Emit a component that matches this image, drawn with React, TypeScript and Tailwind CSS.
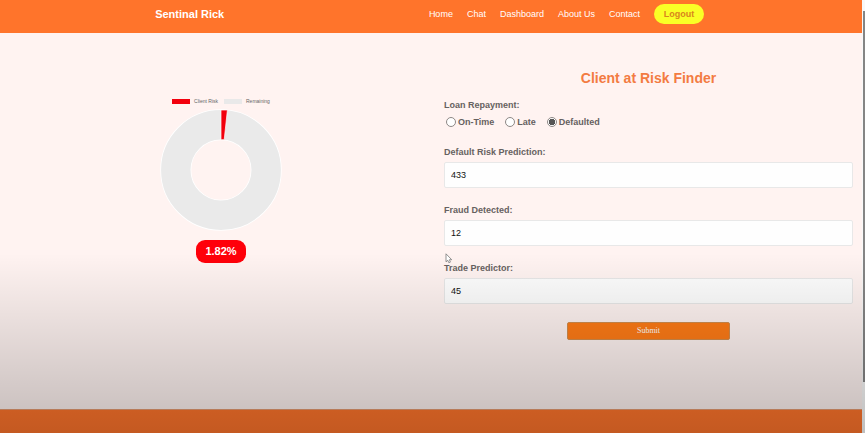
import { useState } from "react";

const links = ["Home", "Chat", "Dashboard", "About Us", "Contact"];
const repayments = ["On-Time", "Late", "Defaulted"];

function Header() {
  return (
    <header className="flex h-[33px] items-start justify-between bg-[#ff742b] pl-[18%] pr-[158px] pt-1 text-white">
      <div className="text-[11px] font-bold leading-5">Sentinal Rick</div>
      <nav className="flex items-center gap-3.5 text-[9px] leading-5">
        {links.map((l) => (
          <a key={l} href="#" className="whitespace-nowrap">
            {l}
          </a>
        ))}
        <button className="h-5 w-[50px] rounded-full bg-[#faff26] font-bold text-[#d9861c]">Logout</button>
      </nav>
    </header>
  );
}

function RiskChart() {
  return (
    <section className="flex flex-col items-center pt-[65px]">
      <div className="flex items-center gap-1.5 text-[5px] leading-[7px] text-[#666]">
        <span className="flex items-center gap-1">
          <i className="h-[5px] w-[18px] bg-[#f2000d]" />
          Client Risk
        </span>
        <span className="flex items-center gap-1">
          <i className="h-[5px] w-[18px] bg-[#e9e9e9]" />
          Remaining
        </span>
      </div>
      <svg viewBox="0 0 122 122" className="mt-1 size-[122px]" role="img" aria-label="Client risk 1.82%">
        <circle cx="61" cy="61" r="45.2" fill="none" stroke="#fff" strokeWidth="31" />
        <circle cx="61" cy="61" r="45.2" fill="none" stroke="#eaeaea" strokeWidth="29.4" />
        <path d="M61 1h6.4L64.2 30.7H61Z" fill="#f2000d" stroke="#fff" strokeWidth="0.7" />
      </svg>
      <div className="mt-[9px] h-[23px] w-[50px] rounded-[9px] bg-[#ff000a] text-center text-[11px] font-bold leading-[23px] text-white">
        1.82%
      </div>
    </section>
  );
}

function Field({ id, label, initial }: { id: string; label: string; initial: string }) {
  const [value, setValue] = useState(initial);
  return (
    <div className="mb-4">
      <label htmlFor={id} className="block h-4 text-[9px] font-bold leading-3 text-[#666160]">
        {label}
      </label>
      <input
        id={id}
        value={value}
        onChange={(e) => setValue(e.target.value)}
        className="block h-[26px] w-full rounded-xs border border-[#e8e8e8] bg-[#fefefe] px-1.5 text-[9px] text-[#111]"
      />
    </div>
  );
}

function RiskForm() {
  const [repayment, setRepayment] = useState("Defaulted");
  return (
    <form className="pl-0.5 pr-[9px] pt-9" onSubmit={(e) => e.preventDefault()}>
      <h1 className="text-center text-sm font-bold leading-[18px] text-[#f37b42]">Client at Risk Finder</h1>
      <fieldset className="mb-[18px] mt-3 text-[9px] font-bold leading-3 text-[#666160]">
        <legend>Loan Repayment:</legend>
        <div className="mt-[5px] flex gap-[11px] pl-0.5">
          {repayments.map((r) => (
            <label key={r} className="flex items-center gap-0.5">
              <input
                type="radio"
                name="repayment"
                checked={repayment === r}
                onChange={() => setRepayment(r)}
                className="size-2.5 appearance-none rounded-full border border-[#8d8987] bg-white bg-clip-padding checked:bg-[radial-gradient(circle,#555_0_3px,#fff_3px)]"
              />
              {r}
            </label>
          ))}
        </div>
      </fieldset>
      <div className="flex flex-col">
        <Field id="risk" label="Default Risk Prediction:" initial="433" />
        <Field id="fraud" label="Fraud Detected:" initial="12" />
        <Field id="trade" label="Trade Predictor:" initial="45" />
      </div>
      <button
        type="submit"
        className="mx-auto mt-0.5 block h-[18px] w-2/5 rounded-xs border border-[#d18c4c] bg-[#ff7b16] font-['Liberation_Serif',serif] text-[8px] leading-4 text-white"
      >
        Submit
      </button>
    </form>
  );
}

export default function App() {
  return (
    <div className="relative flex min-h-screen bg-[#fff3f1] font-['Liberation_Sans',Arial,sans-serif]">
      <div className="flex min-w-0 flex-1 flex-col">
        <Header />
        <main className="grid flex-1 grid-cols-[442fr_420fr]">
          <RiskChart />
          <RiskForm />
        </main>
        <footer className="h-6 border-t border-[#e59a70] bg-[#ff742b]" />
      </div>
      <div className="flex w-[3px] flex-col bg-[#f8f8f8] pb-[51px] pl-px pt-[11px]">
        <div className="flex-1 bg-[#858585]" />
      </div>
      <div className="pointer-events-none absolute inset-x-0 bottom-0 h-[180px] bg-linear-to-b from-black/0 to-black/23" />
      <svg viewBox="0 0 8 11" className="pointer-events-none absolute left-[445px] top-[253px] h-[11px] w-2" aria-hidden="true">
        <path d="M1 .8v8l1.8-1.5 1 2.4 1.6-.6-1-2.4h2.3Z" fill="#fff" stroke="#777" strokeWidth=".8" />
      </svg>
    </div>
  );
}
